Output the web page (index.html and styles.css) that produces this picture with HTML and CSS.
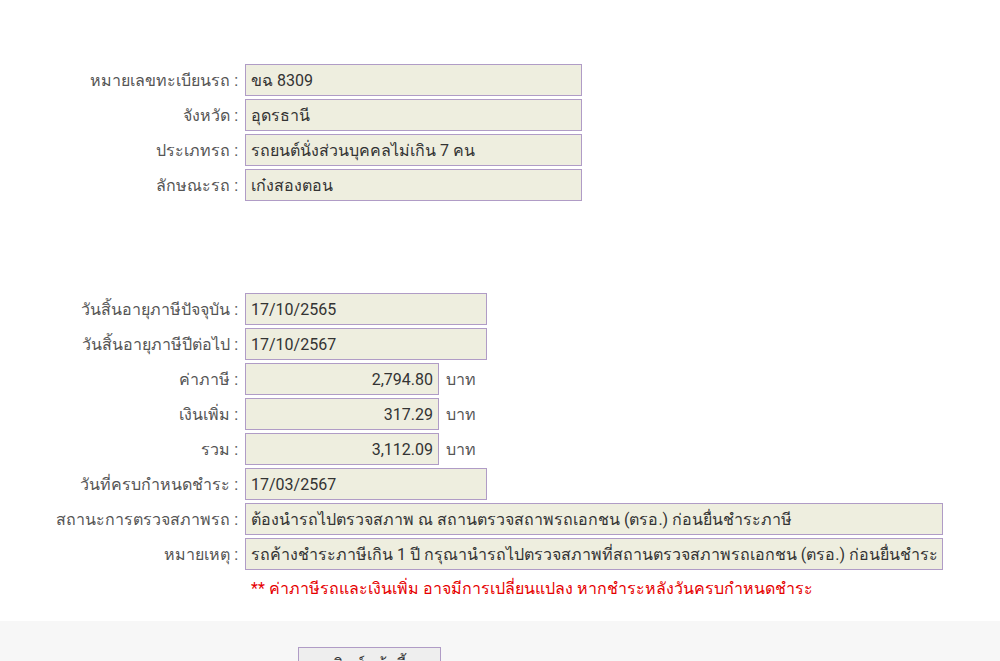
FILE: index.html
```html
<!DOCTYPE html>
<html lang="th">
<head>
  <meta charset="UTF-8" />
  <meta name="viewport" content="width=device-width, initial-scale=1.0">
  <title>ตรวจสอบภาษีรถ</title>
  <link rel="stylesheet" href="styles.css">
</head>
<body>
  <div class="result">
    <div class="group">
      <div class="row">
        <span class="label">หมายเลขทะเบียนรถ :</span>
        <span class="field medium">ขฉ 8309</span>
      </div>
      <div class="row">
        <span class="label">จังหวัด :</span>
        <span class="field medium">อุดรธานี</span>
      </div>
      <div class="row">
        <span class="label">ประเภทรถ :</span>
        <span class="field medium">รถยนต์นั่งส่วนบุคคลไม่เกิน 7 คน</span>
      </div>
      <div class="row">
        <span class="label">ลักษณะรถ :</span>
        <span class="field medium">เก๋งสองตอน</span>
      </div>
    </div>

    <div class="group second">
      <div class="row">
        <span class="label">วันสิ้นอายุภาษีปัจจุบัน :</span>
        <span class="field short">17/10/2565</span>
      </div>
      <div class="row">
        <span class="label">วันสิ้นอายุภาษีปีต่อไป :</span>
        <span class="field short">17/10/2567</span>
      </div>
      <div class="row">
        <span class="label">ค่าภาษี :</span>
        <span class="field money">2,794.80</span>
        <span class="unit">บาท</span>
      </div>
      <div class="row">
        <span class="label">เงินเพิ่ม :</span>
        <span class="field money">317.29</span>
        <span class="unit">บาท</span>
      </div>
      <div class="row">
        <span class="label">รวม :</span>
        <span class="field money">3,112.09</span>
        <span class="unit">บาท</span>
      </div>
      <div class="row">
        <span class="label">วันที่ครบกำหนดชำระ :</span>
        <span class="field short">17/03/2567</span>
      </div>
      <div class="row">
        <span class="label">สถานะการตรวจสภาพรถ :</span>
        <span class="field long">ต้องนำรถไปตรวจสภาพ ณ สถานตรวจสถาพรถเอกชน (ตรอ.) ก่อนยื่นชำระภาษี</span>
      </div>
      <div class="row">
        <span class="label">หมายเหตุ :</span>
        <span class="field long">รถค้างชำระภาษีเกิน 1 ปี กรุณานำรถไปตรวจสภาพที่สถานตรวจสภาพรถเอกชน (ตรอ.) ก่อนยื่นชำระ</span>
      </div>
      <p class="note">** ค่าภาษีรถและเงินเพิ่ม อาจมีการเปลี่ยนแปลง หากชำระหลังวันครบกำหนดชำระ</p>
    </div>
  </div>

  <div class="actions">
    <button class="btn">พิมพ์หน้านี้</button>
  </div>
</body>
</html>
```

FILE: styles.css
```css
* {
  margin: 0;
  padding: 0;
  box-sizing: border-box;
}
body {
  font-family: Roboto, "Noto Sans", sans-serif;
  background: #ffffff;
  color: #333;
}
.result {
  padding: 64px 0 0;
  height: 621px;
}
.group {
  display: flex;
  flex-direction: column;
  gap: 3px;
}
.group.second {
  margin-top: 92px;
}
.row {
  display: flex;
  align-items: center;
  gap: 7px;
}
.label {
  width: 238px;
  text-align: right;
  font-size: 16px;
  color: #555;
  white-space: nowrap;
}
.field {
  height: 32px;
  line-height: 31px;
  padding: 0 5px;
  background: #eeeedf;
  border: 1px solid #b09cc6;
  font-size: 16px;
  color: #333;
  white-space: nowrap;
  overflow: hidden;
}
.field.medium {
  width: 337px;
}
.field.short {
  width: 242px;
}
.field.money {
  width: 194px;
  text-align: right;
}
.field.long {
  width: 698px;
}
.unit {
  font-size: 16px;
  color: #555;
}
.note {
  margin: 3px 0 0 251px;
  font-size: 16px;
  color: #e60000;
}
.actions {
  background: #f7f7f7;
  height: 40px;
  padding: 26px 0 0 298px;
  overflow: hidden;
}
.btn {
  width: 143px;
  height: 34px;
  background: #eeeeee;
  border: 1px solid #b09cc6;
  font-family: Roboto, "Noto Sans", sans-serif;
  font-size: 16px;
  color: #333;
}
```
